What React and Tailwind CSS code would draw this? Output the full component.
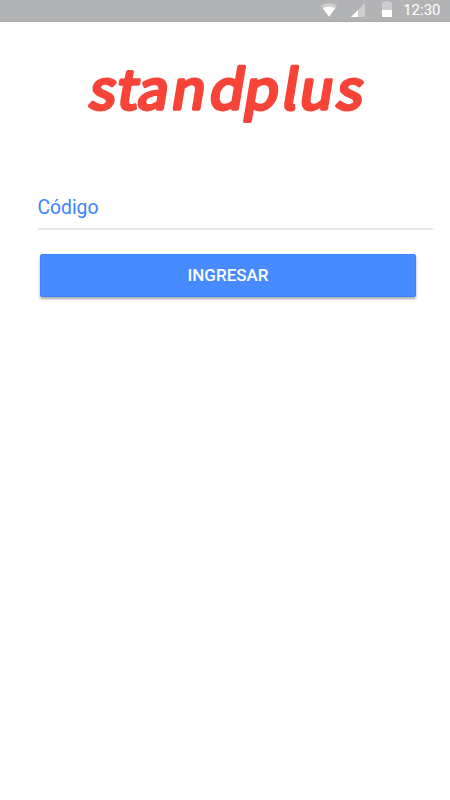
function StatusBar() {
  return (
    <header className="flex h-[22px] items-center justify-end border-b border-[#aaabad] bg-[#b2b3b5] pr-[9.5px] text-white">
      <svg className="mt-[-2px] mr-[13px] h-[15px] w-[18px]" viewBox="0 0 18 15">
        <path d="M.8 3.6Q9-1.8 17.2 3.6L9 14.8Z" fill="#fff" fillOpacity=".35" />
        <path d="M2.6 6Q9 2.8 15.4 6L9 14.8Z" fill="#fff" />
      </svg>
      <svg className="mt-[-1px] mr-[17px] h-[14px] w-[14px]" viewBox="0 0 14 14">
        <path d="M14 0V14H0Z" fill="#fff" fillOpacity=".35" />
        <path d="M7 7V14H0Z" fill="#fff" />
      </svg>
      <svg className="mt-[-3px] mr-[11px] h-[16px] w-[10px]" viewBox="0 0 10 16">
        <path d="M3 0H7L8 1.5H10V16H0V1.5H2Z" fill="#fff" fillOpacity=".35" />
        <path d="M0 9H10V16H0Z" fill="#fff" />
      </svg>
      <span className="text-[15px] leading-[21px]">12:30</span>
    </header>
  );
}

function Logo() {
  return (
    <h1 className="mt-[8px] ml-[70px] h-[120px]">
      <svg className="h-[120px] w-[320px]" viewBox="0 0 320 120">
        <g transform="translate(0 79) scale(1.03 .98) skewX(-9)">
          <text
            x="16.8 43.5 63.1 96.4 133.5 166.8 203.9 220.7 256.8"
            y="0"
            className="fill-[#f74438] stroke-[#f74438] font-['Noto_Sans_CJK_JP',sans-serif] text-[54.5px] font-normal"
            strokeWidth="3.5"
            strokeLinejoin="round"
          >
            standplus
          </text>
        </g>
      </svg>
    </h1>
  );
}

export default function App() {
  return (
    <div className="flex h-[800px] w-[450px] flex-col bg-white font-['Roboto',sans-serif]">
      <StatusBar />
      <main className="flex flex-col">
        <Logo />
        <label className="mt-[44px] ml-[37.5px] flex h-[36px] w-[395.5px] border-b-2 border-[#e6e7e7] text-[19.3px] leading-[27px] text-[#3b84fb]">
          Código
        </label>
        <button className="mt-[24px] ml-[40px] h-[43px] w-[376px] rounded-[2px] border border-[#3b82fb] bg-[#488aff] pt-[1px] text-[17px] font-medium text-white shadow-[0_2px_3px_rgba(0,0,0,0.35)]">
          INGRESAR
        </button>
      </main>
    </div>
  );
}
